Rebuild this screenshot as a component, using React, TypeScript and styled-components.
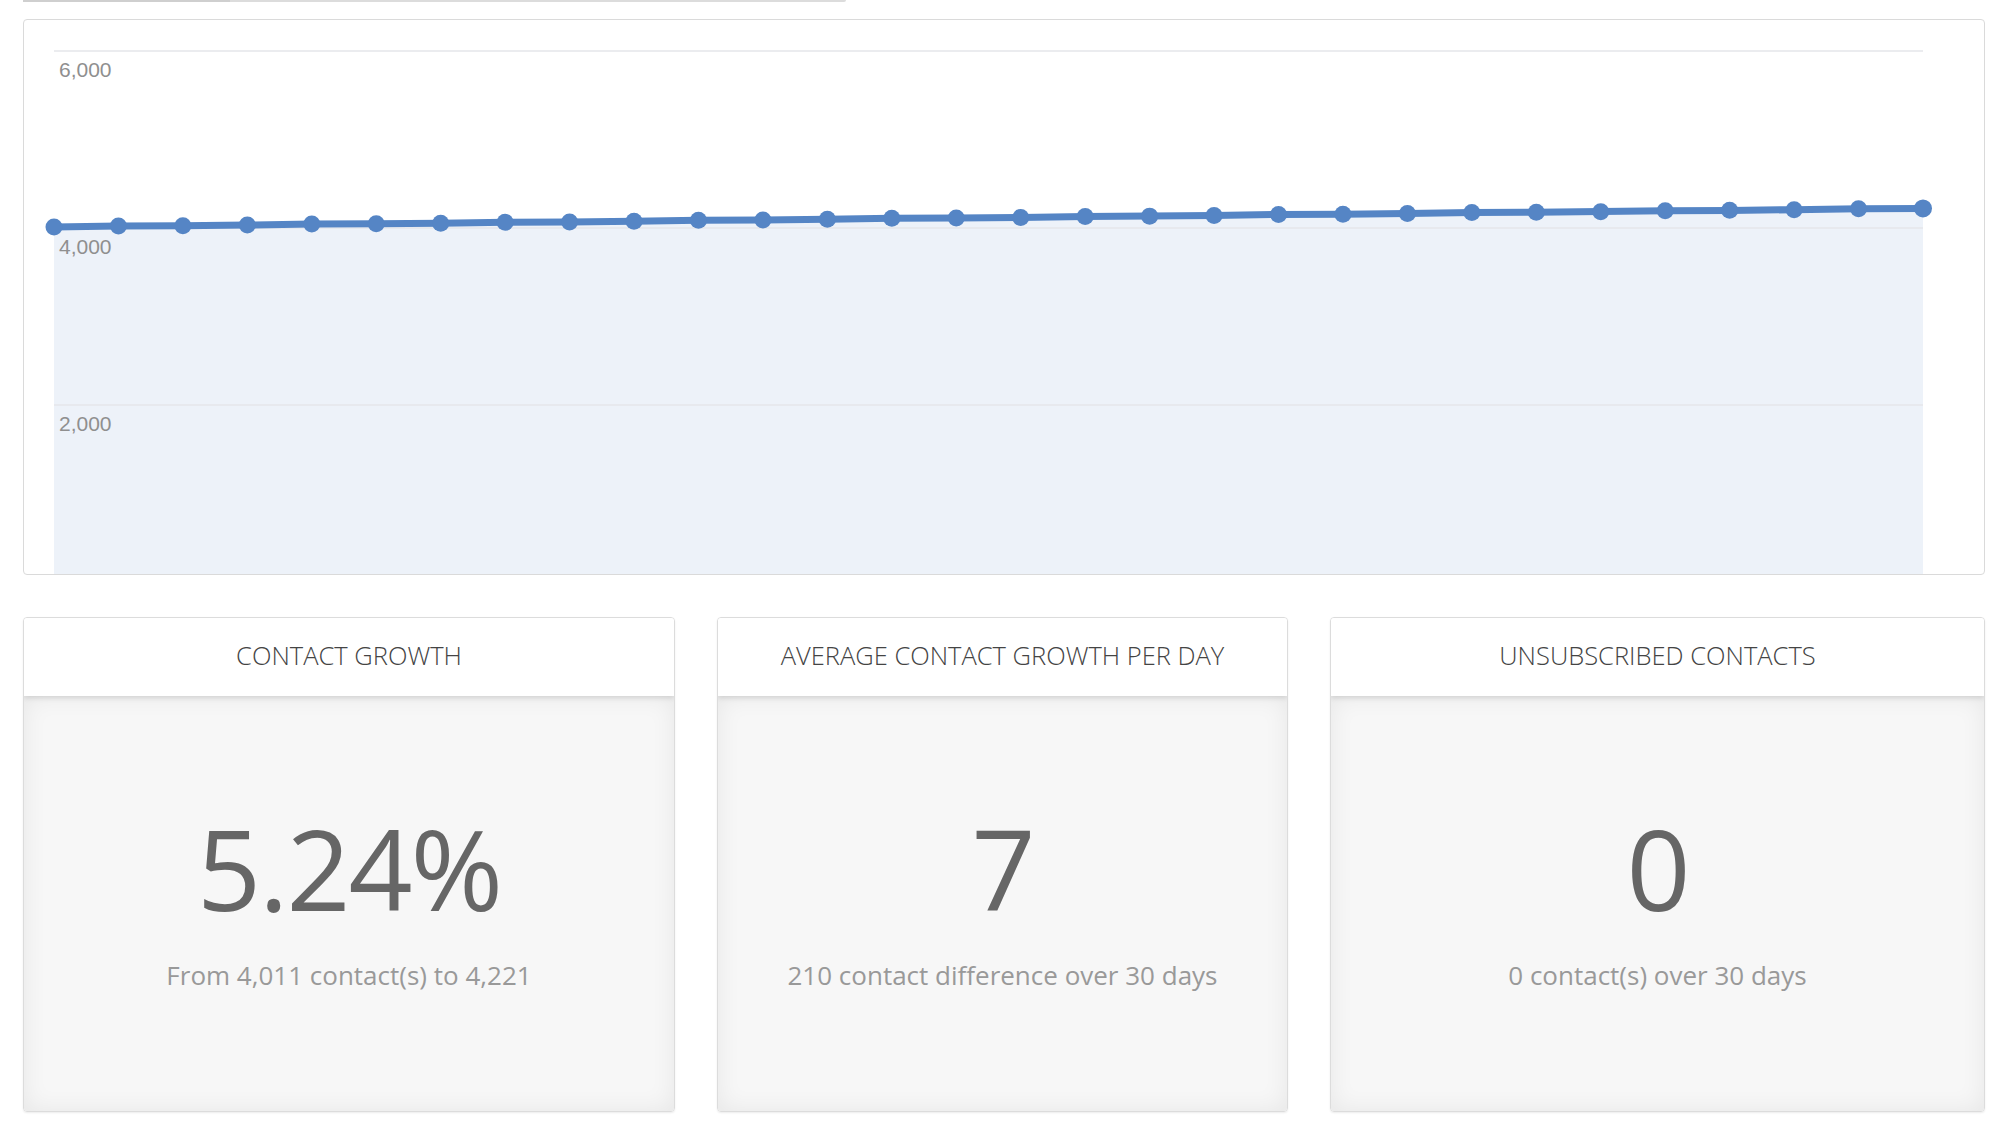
import React from "react";
import styled, { createGlobalStyle } from "styled-components";

const Global = createGlobalStyle`
  html, body { margin: 0; padding: 0; background: #fff; }
  body { font-family: "Open Sans", "Liberation Sans", sans-serif; }
`;

const Page = styled.div`
  width: 2004px;
  height: 1138px;
  padding: 0 19px 0 23px;
  box-sizing: border-box;
  display: flex;
  flex-direction: column;
  overflow: hidden;
`;

const TopStrip = styled.div`
  width: 823px;
  height: 2px;
  background: #dcdcdc;
  border-radius: 0 0 3px 3px;
  display: flex;
`;
const TopStripDark = styled.div`
  width: 207px;
  height: 2px;
  background: #cfcfcf;
`;

const ChartPanel = styled.div`
  margin-top: 17px;
  height: 556px;
  border: 1.5px solid #dadada;
  border-radius: 4px;
  box-sizing: border-box;
  padding: 11px 60px 0 30px;
  display: flex;
  overflow: hidden;
`;

const ChartSvg = styled.svg`
  display: block;
  overflow: visible;
`;

const CardsRow = styled.div`
  margin-top: 42px;
  display: grid;
  grid-template-columns: 652px 571px 655px;
  column-gap: 42px;
`;

const Card = styled.div`
  height: 495px;
  border: 1.5px solid #dcdcdc;
  border-radius: 4px;
  box-sizing: border-box;
  display: flex;
  flex-direction: column;
  overflow: hidden;
  box-shadow: 0 1px 2px rgba(0,0,0,0.08);
`;

const CardHead = styled.div`
  height: 78px;
  padding-bottom: 4px;
  box-sizing: border-box;
  background: #fff;
  display: flex;
  align-items: center;
  justify-content: center;
  font-size: 25.5px;
  font-weight: 300;
  color: #444;
  box-shadow: 0 2px 5px rgba(0,0,0,0.12);
  position: relative;
  z-index: 1;
`;

const CardBody = styled.div`
  flex: 1;
  background: #f7f7f7;
  box-shadow: inset 0 0 24px rgba(0,0,0,0.07);
  display: flex;
  flex-direction: column;
  align-items: center;
  padding-top: 104px;
`;

const BigNum = styled.div`
  font-size: 112px;
  line-height: 136px;
  color: #666;
  font-weight: 400;
  letter-spacing: -2px;
`;

const SubText = styled.div`
  margin-top: 21px;
  font-size: 26px;
  color: #999;
`;

const W = 1869;
const yFor = (v: number) => 20 + ((6000 - v) / 2000) * 177;

export default function App() {
  const n = 30;
  const pts = Array.from({ length: n }, (_, i) => {
    const v = 4011 + (210 * i) / (n - 1) + (i % 3 === 1 ? 4 : 0);
    return [(W * i) / (n - 1), yFor(v)];
  });
  const line = pts.map((p, i) => `${i ? "L" : "M"}${p[0].toFixed(1)},${p[1].toFixed(1)}`).join(" ");
  const area = `${line} L${W},600 L0,600 Z`;
  return (
    <Page>
      <Global />
      <TopStrip><TopStripDark /></TopStrip>
      <ChartPanel>
        <ChartSvg width={W} height={545} viewBox={`0 0 ${W} 545`}>
          <path d={area} fill="#edf2f9" />
          {[6000, 4000, 2000].map((v) => (
            <g key={v}>
              <line x1={0} x2={W} y1={yFor(v)} y2={yFor(v)} stroke="#e4e6ea" strokeWidth={1.5} />
              <text x={5} y={yFor(v) + 26} fontFamily="Liberation Sans, Arial, sans-serif" fontSize={21} fill="#8f8f8f">
                {v.toLocaleString("en-US")}
              </text>
            </g>
          ))}
          <path d={line} fill="none" stroke="#5585c5" strokeWidth={7} strokeLinejoin="round" />
          {pts.map((p, i) => (
            <circle key={i} cx={p[0]} cy={p[1]} r={i === n - 1 ? 9 : 8.5} fill="#5585c5" />
          ))}
        </ChartSvg>
      </ChartPanel>
      <CardsRow>
        <Card>
          <CardHead>CONTACT GROWTH</CardHead>
          <CardBody>
            <BigNum>5.24%</BigNum>
            <SubText>From 4,011 contact(s) to 4,221</SubText>
          </CardBody>
        </Card>
        <Card>
          <CardHead>AVERAGE CONTACT GROWTH PER DAY</CardHead>
          <CardBody>
            <BigNum>7</BigNum>
            <SubText>210 contact difference over 30 days</SubText>
          </CardBody>
        </Card>
        <Card>
          <CardHead>UNSUBSCRIBED CONTACTS</CardHead>
          <CardBody>
            <BigNum>0</BigNum>
            <SubText>0 contact(s) over 30 days</SubText>
          </CardBody>
        </Card>
      </CardsRow>
    </Page>
  );
}
